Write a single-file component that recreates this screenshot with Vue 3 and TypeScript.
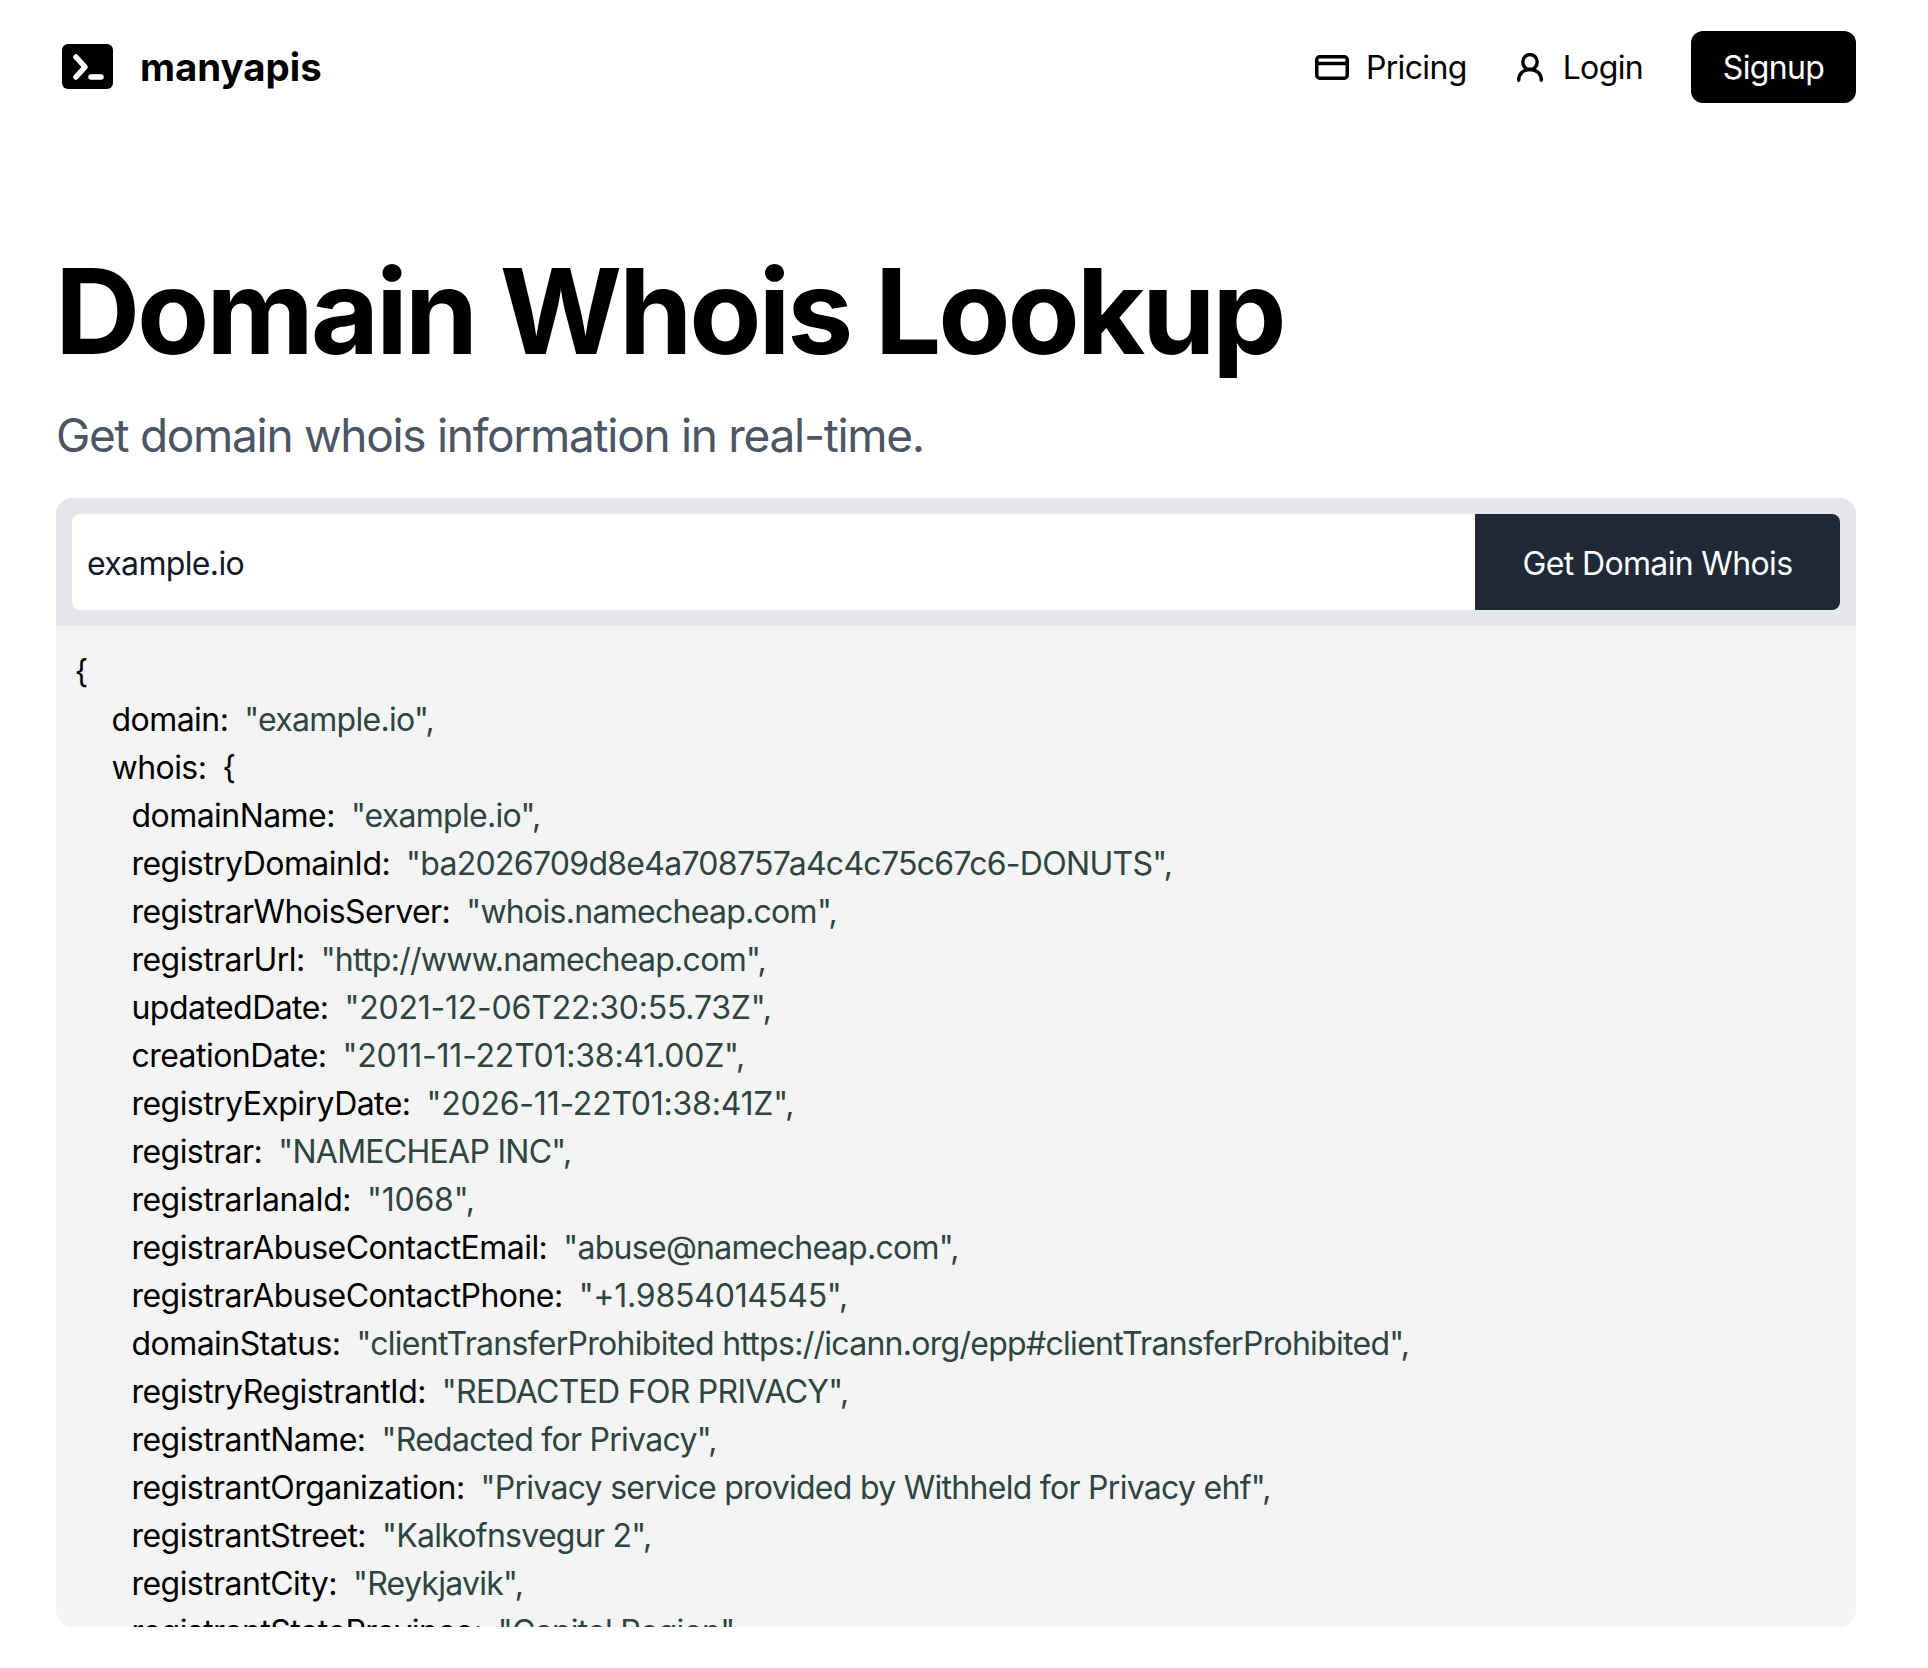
<script setup lang="ts">
interface Row { k: string; v?: string; indent: number; open?: boolean; num?: boolean }
const rows: Row[] = [
  { k: 'domain', v: '"example.io",', indent: 1 },
  { k: 'whois', indent: 1, open: true },
  { k: 'domainName', v: '"example.io",', indent: 2 },
  { k: 'registryDomainId', v: '"ba2026709d8e4a708757a4c4c75c67c6-DONUTS",', indent: 2 },
  { k: 'registrarWhoisServer', v: '"whois.namecheap.com",', indent: 2 },
  { k: 'registrarUrl', v: '"http://www.namecheap.com",', indent: 2 },
  { k: 'updatedDate', v: '"2021-12-06T22:30:55.73Z",', indent: 2, num: true },
  { k: 'creationDate', v: '"2011-11-22T01:38:41.00Z",', indent: 2, num: true },
  { k: 'registryExpiryDate', v: '"2026-11-22T01:38:41Z",', indent: 2, num: true },
  { k: 'registrar', v: '"NAMECHEAP INC",', indent: 2 },
  { k: 'registrarIanaId', v: '"1068",', indent: 2, num: true },
  { k: 'registrarAbuseContactEmail', v: '"abuse@namecheap.com",', indent: 2 },
  { k: 'registrarAbuseContactPhone', v: '"+1.9854014545",', indent: 2, num: true },
  { k: 'domainStatus', v: '"clientTransferProhibited https://icann.org/epp#clientTransferProhibited",', indent: 2 },
  { k: 'registryRegistrantId', v: '"REDACTED FOR PRIVACY",', indent: 2 },
  { k: 'registrantName', v: '"Redacted for Privacy",', indent: 2 },
  { k: 'registrantOrganization', v: '"Privacy service provided by Withheld for Privacy ehf",', indent: 2 },
  { k: 'registrantStreet', v: '"Kalkofnsvegur 2",', indent: 2 },
  { k: 'registrantCity', v: '"Reykjavik",', indent: 2 },
  { k: 'registrantStateProvince', v: '"Capital Region",', indent: 2 },
]
</script>

<template>
  <div class="page">
    <header class="nav">
      <a class="brand">
        <svg class="logo" viewBox="0 0 51 45" aria-hidden="true">
          <rect x="0" y="0" width="51" height="45" rx="6" fill="#000" />
          <path d="M14 13 L23 23 L14 33" fill="none" stroke="#fff" stroke-width="5.5" stroke-linecap="round" stroke-linejoin="round" />
          <path d="M29 33 H39" fill="none" stroke="#fff" stroke-width="5.5" stroke-linecap="round" />
        </svg>
        <span class="brand-name">manyapis</span>
      </a>
      <nav class="links">
        <a class="link link-pricing">
          <svg class="icon-card" viewBox="0 0 34 25" aria-hidden="true">
            <rect x="1.75" y="1.75" width="30.5" height="21.5" rx="3" fill="none" stroke="#000" stroke-width="3.5" />
            <path d="M1.75 8.5 H32.25" stroke="#000" stroke-width="3.5" />
          </svg>
          <span class="link-text">Pricing</span>
        </a>
        <a class="link link-login">
          <svg class="icon-user" viewBox="0 0 26 29" aria-hidden="true">
            <ellipse cx="13" cy="9" rx="7.2" ry="7.5" fill="none" stroke="#000" stroke-width="3.4" />
            <path d="M1.7 27.3 C1.7 21 6 16.5 13 16.5 C20 16.5 24.3 21 24.3 27.3" fill="none" stroke="#000" stroke-width="3.4" stroke-linecap="round" />
          </svg>
          <span class="link-text">Login</span>
        </a>
        <a class="signup">Signup</a>
      </nav>
    </header>

    <main class="main">
      <h1 class="title">Domain Whois Lookup</h1>
      <p class="subtitle">Get domain whois information in real-time.</p>

      <section class="card">
        <div class="bar">
          <div class="input">example.io</div>
          <button class="go" type="button">Get Domain Whois</button>
        </div>
        <div class="code">
          <div class="line">{</div>
          <div v-for="r in rows" :key="r.k" class="line" :class="`indent-${r.indent}`">
            <span class="key">{{ r.k }}:</span>
            <span v-if="r.v" class="val" :class="{ num: r.num }">{{ r.v }}</span>
            <span v-else-if="r.open" class="brace">{</span>
          </div>
        </div>
      </section>
    </main>
  </div>
</template>

<style scoped>
.page {
  box-sizing: border-box;
  width: 1912px;
  height: 1668px;
  padding: 0 56px;
  font-family: Inter, "Noto Sans", sans-serif;
  color: #000;
  background: #fff;
  overflow: hidden;
  letter-spacing: -0.65px;
}
.nav {
  display: flex;
  align-items: center;
  justify-content: space-between;
  height: 72px;
  margin-top: 31px;
}
.brand {
  display: flex;
  align-items: center;
  padding-left: 6px;
  gap: 27px;
}
.logo { width: 51px; height: 45px; margin-top: -2px; }
.brand-name {
  font-size: 38.4px;
  font-weight: 700;
  letter-spacing: 0;
  line-height: 44px;
}
.links { display: flex; align-items: center; }
.link {
  display: flex;
  align-items: center;
  font-size: 32px;
  line-height: 40px;
}
.link-text { padding-top: 2px; }
.link-pricing { margin-right: 50px; }
.link-login { margin-right: 48px; }
.icon-card { width: 34px; height: 25px; margin-right: 17px; }
.icon-user { width: 26px; height: 29px; margin-right: 20px; }
.signup {
  display: flex;
  align-items: center;
  justify-content: center;
  width: 165px;
  height: 72px;
  box-sizing: border-box;
  background: #000;
  color: #fff;
  border-radius: 12px;
  font-size: 32px;
}
.title {
  margin: 0 0 0 -1px;
  margin-top: 148px;
  font-size: 118px;
  line-height: 120px;
  font-weight: 700;
  letter-spacing: -3.2px;
}
.subtitle {
  margin: 36px 0 0;
  font-size: 46px;
  line-height: 56px;
  color: #4b5563;
  letter-spacing: -1.3px;
}
.card {
  margin-top: 35px;
  border-radius: 16px;
  overflow: hidden;
  height: 1129px;
  background: #f4f4f5;
}
.bar {
  display: flex;
  padding: 16px;
  background: #e5e7eb;
}
.input {
  flex: 1;
  box-sizing: border-box;
  height: 96px;
  display: flex;
  align-items: center;
  padding: 2px 16px 0 15px;
  background: #fff;
  border-radius: 8px 0 0 8px;
  font-size: 32px;
  color: #111827;
}
.go {
  width: 365px;
  height: 96px;
  border: 0;
  padding: 2px 0 0;
  background: #1f2937;
  color: #fff;
  border-radius: 0 8px 8px 0;
  font-family: inherit;
  font-size: 32px;
  letter-spacing: inherit;
}
.code {
  padding: 22px 18.5px 0;
  font-size: 32px;
  line-height: 48px;
}
.line { white-space: pre; height: 48px; }
.indent-1 { padding-left: 37px; }
.indent-2 { padding-left: 57px; }
.key { color: #000; margin-right: 16px; letter-spacing: -0.55px; }
.val { color: #2d4440; letter-spacing: -0.72px; }
.val.num { letter-spacing: -0.22px; }
.brace { color: #000; }
</style>

<style>
html, body { margin: 0; padding: 0; background: #fff; }
</style>
